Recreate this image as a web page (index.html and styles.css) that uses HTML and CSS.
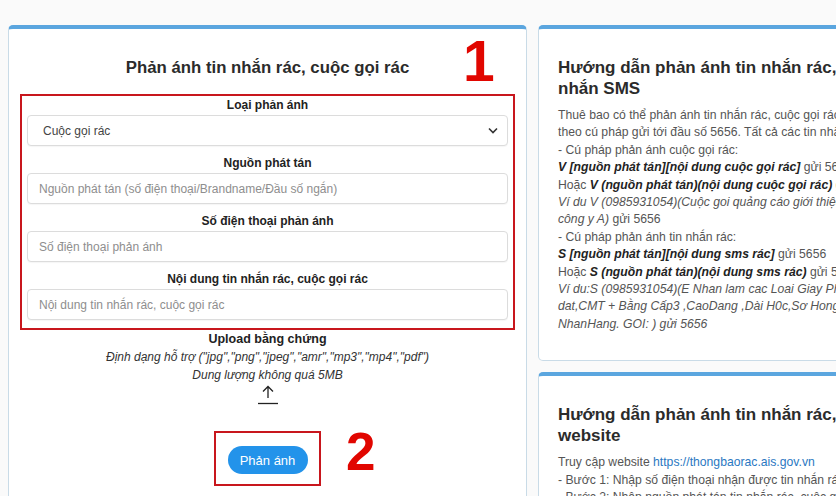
FILE: index.html
```html
<!DOCTYPE html>
<html lang="vi">
<head>
<meta charset="utf-8">
<title>Phản ánh tin nhắn rác</title>
<link rel="stylesheet" href="styles.css">
</head>
<body>
<div class="page">
  <section class="card card-form">
    <h2 class="form-title">Phản ánh tin nhắn rác, cuộc gọi rác</h2>
    <span class="mark mark-1">1</span>
    <div class="fields">
      <label class="field-label">Loại phản ánh</label>
      <div class="control select">
        <span class="value">Cuộc gọi rác</span>
        <svg class="chevron" width="10" height="7" viewBox="0 0 10 7"><path d="M1 1.5 L5 5.5 L9 1.5" fill="none" stroke="#333" stroke-width="1.6"/></svg>
      </div>
      <label class="field-label">Nguồn phát tán</label>
      <div class="control input">Nguồn phát tán (số điện thoại/Brandname/Đầu số ngắn)</div>
      <label class="field-label">Số điện thoại phản ánh</label>
      <div class="control input">Số điện thoại phản ánh</div>
      <label class="field-label">Nội dung tin nhắn rác, cuộc gọi rác</label>
      <div class="control input">Nội dung tin nhắn rác, cuộc gọi rác</div>
    </div>
    <div class="upload">
      <div class="upload-title">Upload bằng chứng</div>
      <div class="upload-note">Định dạng hỗ trợ ("jpg","png","jpeg","amr","mp3","mp4","pdf")</div>
      <div class="upload-note">Dung lượng không quá 5MB</div>
      <svg class="upload-icon" width="22" height="20" viewBox="0 0 22 20">
        <path d="M11 1.5 V13 M6 6.5 L11 1.5 L16 6.5" fill="none" stroke="#222" stroke-width="1.3"/>
        <path d="M1 18.5 H21" stroke="#222" stroke-width="1.3"/>
      </svg>
    </div>
    <div class="submit-wrap">
      <button class="submit">Phản ánh</button>
      <span class="mark mark-2">2</span>
    </div>
  </section>

  <div class="side">
    <section class="card card-guide">
      <h2 class="guide-title">Hướng dẫn phản ánh tin nhắn rác, cuộc gọi rác qua tin<br>nhắn SMS</h2>
      <p class="guide-text">Thuê bao có thể phản ánh tin nhắn rác, cuộc gọi rác qua tin nhắn SMS<br>theo cú pháp gửi tới đầu số 5656. Tất cả các tin nhắn đều miễn phí<br>- Cú pháp phản ánh cuộc gọi rác:<br><b><i>V [nguồn phát tán][nội dung cuộc gọi rác]</i></b> gửi 5656<br>Hoặc <b><i>V (nguồn phát tán)(nội dung cuộc gọi rác)</i></b> gửi 5656<br><i>Ví du V (0985931054)(Cuộc goi quảng cáo giới thiệu sản phẩm của</i><br><i>công y A)</i> gửi 5656<br>- Cú pháp phản ánh tin nhắn rác:<br><b><i>S [nguồn phát tán][nội dung sms rác]</i></b> gửi 5656<br>Hoặc <b><i>S (nguồn phát tán)(nội dung sms rác)</i></b> gửi 5656<br><i>Ví du:S (0985931054)(E Nhan lam cac Loai Giay Phep Lai Xe,</i><br><i>dat,CMT + Bằng Cấp3 ,CaoDang ,Dài H0c,Sơ Hong, Sơ Do,</i><br><i>NhanHang. GOI: ) gửi 5656</i></p>
    </section>
    <section class="card card-guide">
      <h2 class="guide-title">Hướng dẫn phản ánh tin nhắn rác, cuộc gọi rác qua<br>website</h2>
      <p class="guide-text">Truy cập website <a href="#">https://thongbaorac.ais.gov.vn</a><br>- Bước 1: Nhập số điện thoại nhận được tin nhắn rác, cuộc gọi rác<br>- Bước 2: Nhập nguồn phát tán tin nhắn rác, cuộc gọi rác</p>
    </section>
  </div>
</div>
</body>
</html>
```

FILE: styles.css
```css
html, body {
  margin: 0;
  padding: 0;
}
body {
  background: #fafafa;
  font-family: "Liberation Sans", Arial, sans-serif;
  color: #333;
  overflow: hidden;
  width: 836px;
  height: 496px;
}
.page {
  display: flex;
  align-items: flex-start;
  gap: 11px;
  padding: 25px 0 0 8px;
  width: 1200px;
}
.card {
  background: #fff;
  border: 1px solid #c9dbe7;
  border-top: 4px solid #5ba6df;
  border-radius: 5px;
  box-sizing: border-box;
}
.card-form {
  position: relative;
  width: 519px;
  height: 520px;
  flex: none;
  padding-top: 29px;
}
.form-title {
  margin: 0 0 16px;
  text-align: center;
  font-size: 16.8px;
  line-height: 20px;
  font-weight: bold;
  color: #2b2b2b;
}
.mark {
  position: absolute;
  color: #e10600;
  font-weight: bold;
  line-height: 1;
}
.mark-1 {
  font-size: 57px;
  left: 454px;
  top: 4px;
}
.fields {
  margin: 0 11px;
  border: 2px solid #c8161d;
  padding: 1px 5px 8px;
  display: flex;
  flex-direction: column;
}
.field-label {
  display: block;
  text-align: center;
  font-size: 12px;
  line-height: 17px;
  font-weight: bold;
  color: #222;
  margin-bottom: 1px;
}
.control {
  box-sizing: border-box;
  height: 31px;
  border: 1px solid #dcdcdc;
  border-radius: 4px;
  background: #fff;
  font-size: 12px;
  display: flex;
  align-items: center;
  margin-bottom: 9px;
  box-shadow: 0 1px 1px rgba(0,0,0,0.04);
}
.control:last-child {
  margin-bottom: 0;
}
.input {
  padding-left: 11px;
  color: #8e8e8e;
}
.select {
  padding: 0 9px 0 15px;
  justify-content: space-between;
  color: #444;
}
.upload {
  display: flex;
  flex-direction: column;
  align-items: center;
  padding-top: 1px;
}
.upload-title {
  font-size: 12.5px;
  line-height: 17px;
  font-weight: bold;
  color: #222;
}
.upload-note {
  font-size: 12px;
  line-height: 18px;
  font-style: italic;
  color: #333;
}
.upload-icon {
  display: block;
  margin-top: 1px;
}
.submit-wrap {
  position: relative;
  width: 107px;
  height: 55px;
  box-sizing: border-box;
  margin: 26px auto 0;
  border: 2px solid #c8161d;
  display: flex;
  justify-content: center;
  padding-top: 13px;
}
.submit {
  width: 80px;
  height: 28px;
  border: none;
  border-radius: 14px;
  background: #2393ea;
  color: #fff;
  font-family: "Liberation Sans", Arial, sans-serif;
  font-size: 13px;
  padding: 0;
}
.mark-2 {
  font-size: 53px;
  left: 130px;
  top: -8px;
}
.side {
  width: 330px;
  flex: none;
  display: flex;
  flex-direction: column;
  gap: 11px;
}
.card-guide {
  padding: 28px 0 27px 19px;
  overflow: hidden;
}
.guide-title {
  margin: 0 0 8px;
  font-size: 17px;
  line-height: 21px;
  font-weight: bold;
  color: #2b2b2b;
  white-space: nowrap;
}
.guide-text {
  margin: 0;
  font-size: 12.2px;
  line-height: 17.4px;
  color: #555;
  white-space: nowrap;
}
.guide-text b {
  color: #222;
}
.guide-text a {
  color: #2a78c2;
  text-decoration: none;
}
```
